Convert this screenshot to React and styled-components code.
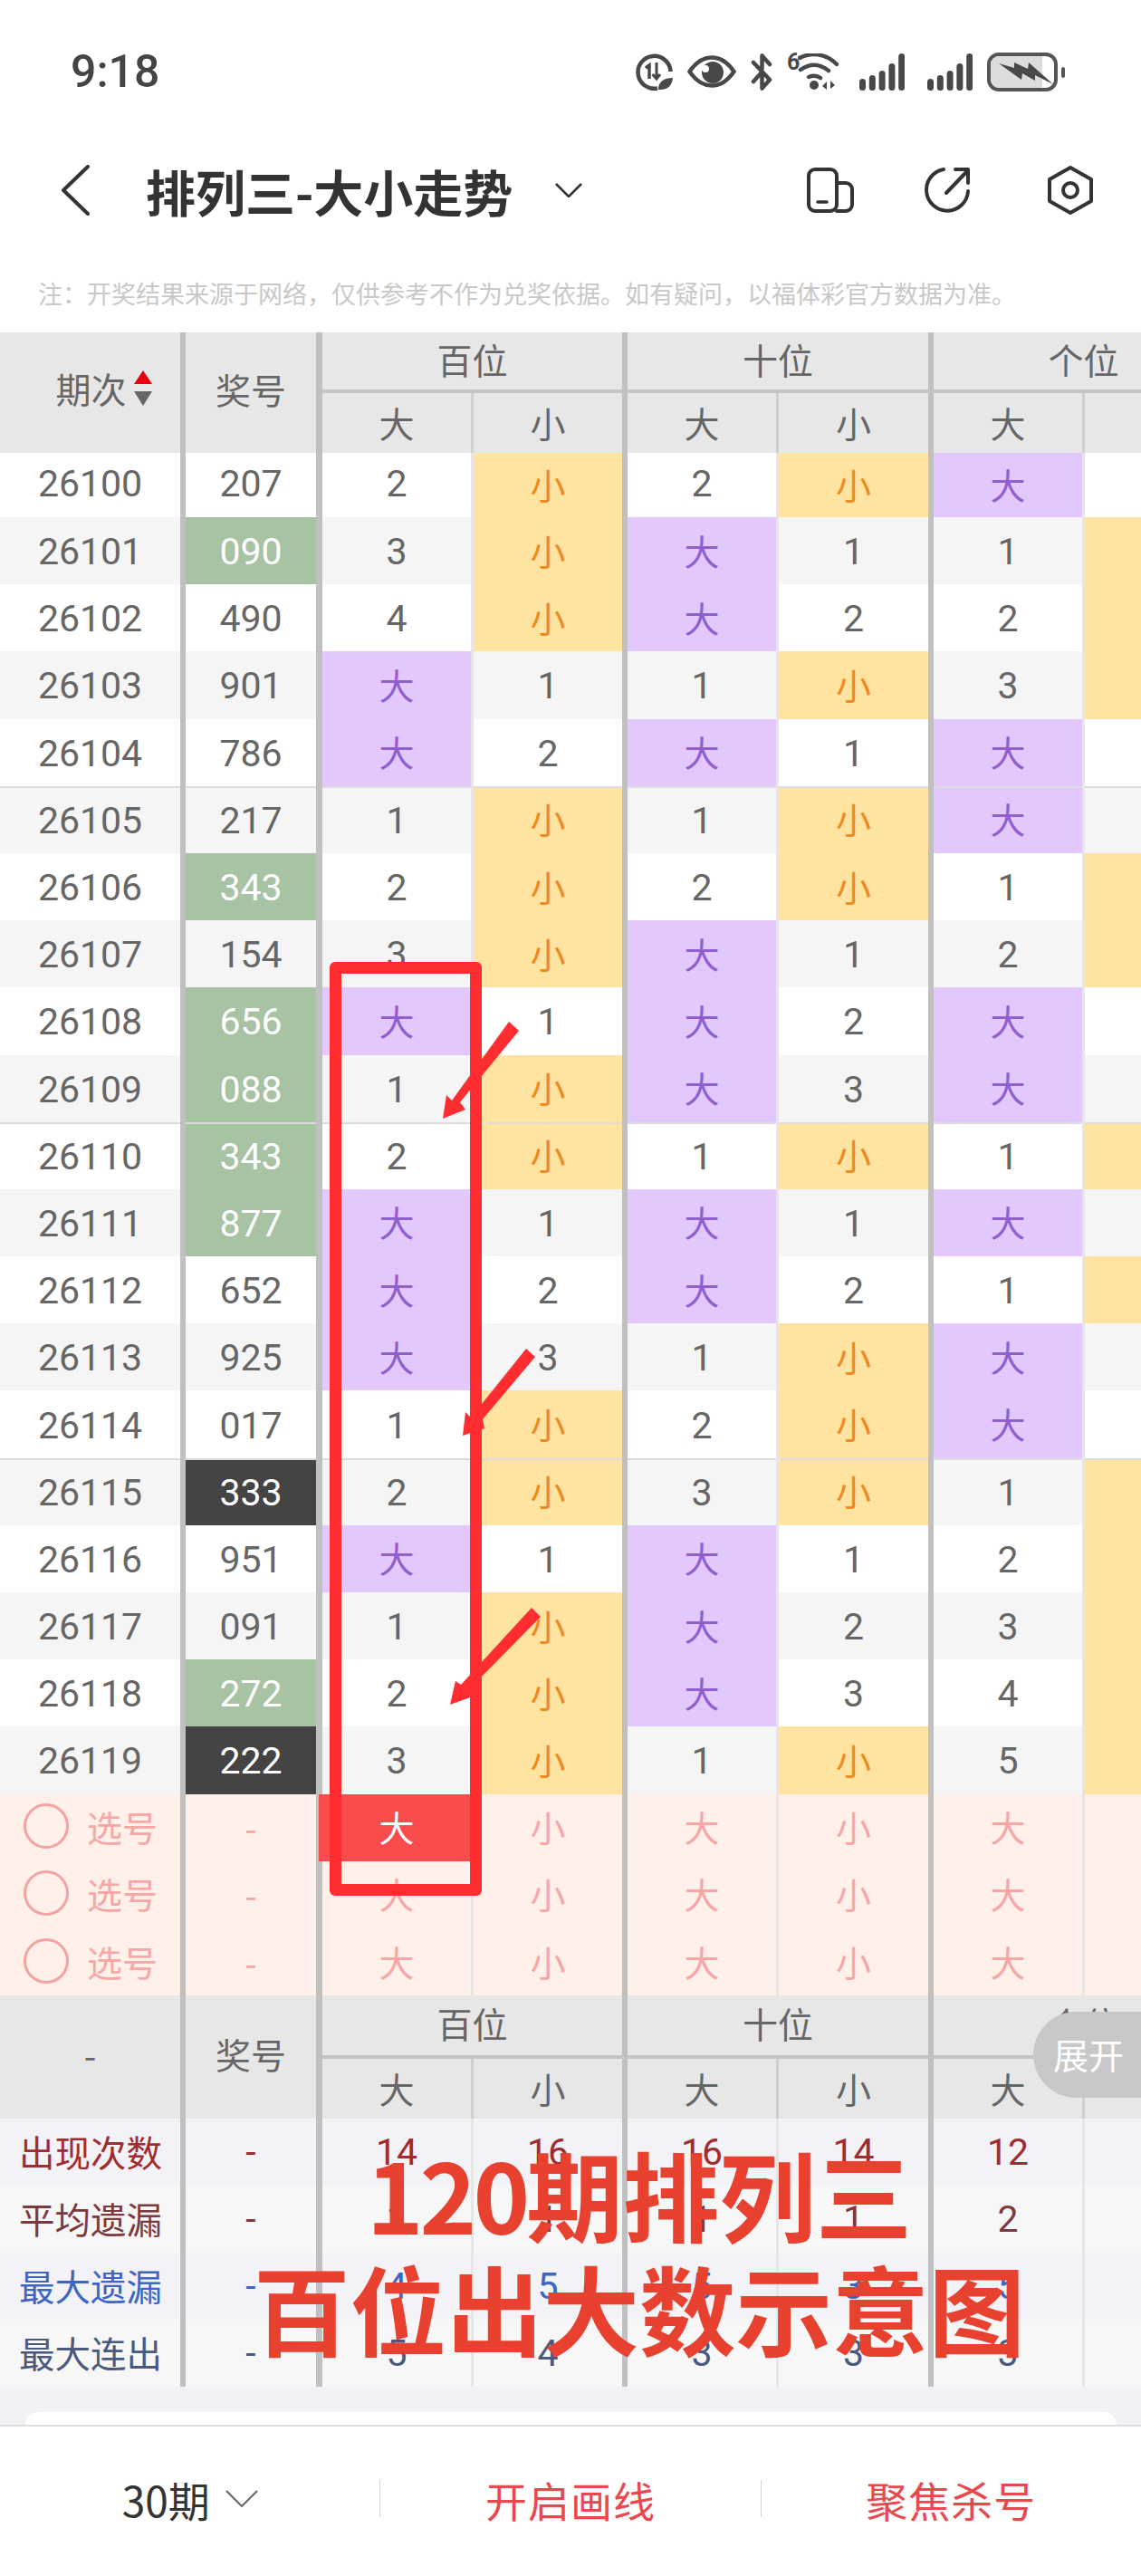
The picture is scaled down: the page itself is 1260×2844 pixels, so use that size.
import styled, { createGlobalStyle } from "styled-components"

const GlobalStyle = createGlobalStyle`
    html, body {
        margin: 0;
        padding: 0;
        background: #fff;
    }
    * {
        box-sizing: border-box;
    }
`

const COLS = "205px 151px 167px 170px 167px 171px 167px 170px"
const SANS = `Roboto, "Noto Sans CJK SC", sans-serif`
const CJK = `"Noto Sans CJK SC", sans-serif`

// period, number, number tone, then 百大 百小 十大 十小 个大 个小
const rows = [
    ["26100", "207", "", "2", "小", "2", "小", "大", "1"],
    ["26101", "090", "green", "3", "小", "大", "1", "1", "小"],
    ["26102", "490", "", "4", "小", "大", "2", "2", "小"],
    ["26103", "901", "", "大", "1", "1", "小", "3", "小"],
    ["26104", "786", "", "大", "2", "大", "1", "大", "1"],
    ["26105", "217", "", "1", "小", "1", "小", "大", "2"],
    ["26106", "343", "green", "2", "小", "2", "小", "1", "小"],
    ["26107", "154", "", "3", "小", "大", "1", "2", "小"],
    ["26108", "656", "green", "大", "1", "大", "2", "大", "1"],
    ["26109", "088", "green", "1", "小", "大", "3", "大", "2"],
    ["26110", "343", "green", "2", "小", "1", "小", "1", "小"],
    ["26111", "877", "green", "大", "1", "大", "1", "大", "1"],
    ["26112", "652", "", "大", "2", "大", "2", "1", "小"],
    ["26113", "925", "", "大", "3", "1", "小", "大", "1"],
    ["26114", "017", "", "1", "小", "2", "小", "大", "2"],
    ["26115", "333", "black", "2", "小", "3", "小", "1", "小"],
    ["26116", "951", "", "大", "1", "大", "1", "2", "小"],
    ["26117", "091", "", "1", "小", "大", "2", "3", "小"],
    ["26118", "272", "green", "2", "小", "大", "3", "4", "小"],
    ["26119", "222", "black", "3", "小", "1", "小", "5", "小"],
]

const stats = [
    { label: "出现次数", color: "#a02c30", values: ["14", "16", "16", "14", "12", ""] },
    { label: "平均遗漏", color: "#7c3a3e", values: ["1", "1", "1", "1", "2", ""] },
    { label: "最大遗漏", color: "#3d66c4", values: ["4", "5", "5", "3", "5", ""] },
    { label: "最大连出", color: "#4a5a7e", values: ["5", "4", "3", "3", "3", ""] },
]

const toneOf = (v) => (v === "大" ? "big" : v === "小" ? "small" : "")

function StatusIcons() {
    return (
        <IconRow>
            <svg width="41" height="41" viewBox="0 0 41 41" fill="none" stroke="#484848">
                <path d="M24 38.5A18 18 0 1 1 38.5 20" strokeWidth="4.5" />
                <path d="M11 16l4-3v15" strokeWidth="3.5" />
                <path d="M23 10v18M18.5 23l4.5 5 4-5" strokeWidth="3" />
                <path d="M25 40c0-9 6-13 16-13-1 9-6 13-14 13z" fill="#484848" stroke="none" />
            </svg>
            <svg width="54" height="36" viewBox="0 0 54 36" fill="none">
                <path d="M2.5 18C10 7 18 2.5 27 2.5S44 7 51.5 18C44 29 36 33.5 27 33.5S10 29 2.5 18z" stroke="#484848" strokeWidth="4.5" />
                <circle cx="28" cy="19" r="12" fill="#484848" />
                <circle cx="20" cy="15" r="4" fill="#fff" />
            </svg>
            <svg width="24" height="41" viewBox="0 0 24 41" fill="none" stroke="#484848" strokeWidth="4.5" strokeLinejoin="round" strokeLinecap="round">
                <path d="M3 10l18 19-8.5 9.5V24M21 12l-8.5-9.5V17M3 31l9-10" />
            </svg>
            <Wifi>
                <WifiSix>6</WifiSix>
                <svg width="45" height="41" viewBox="0 0 45 41" fill="none" stroke="#484848" strokeWidth="4.5" strokeLinecap="round">
                    <path d="M2 5C14-1 30-1 43 12" />
                    <path d="M3 18c10-7 21-7 31 1" />
                    <path d="M12 26c5-2 9-2 13 1" />
                    <circle cx="18" cy="35" r="5" fill="#484848" stroke="none" />
                    <path d="M27 36l5-5v9zM36 30v9l5-4" fill="#484848" stroke="none" />
                </svg>
            </Wifi>
            <SignalIcon $gap={7} />
            <SignalIcon $gap={9} />
            <svg width="86" height="43" viewBox="0 0 86 43" fill="none">
                <rect x="2" y="2" width="74" height="39" rx="11" fill="#fff" stroke="#555" strokeWidth="4" />
                <path d="M4 13a9 9 0 0 1 9-9h48v35H13a9 9 0 0 1-9-9z" fill="#dcdcdc" />
                <path d="M13 12l17 5 0-6 15 7 1-7 27 24-20-10 0 6-14-8-1 7z" fill="#484848" />
                <rect x="82" y="16" width="4" height="12" rx="2" fill="#555" />
            </svg>
        </IconRow>
    )
}

function SignalIcon({ $gap }) {
    const bars = [13, 17, 22, 30, 41]
    return (
        <SignalSvg $gap={$gap} width="50" height="41" viewBox="0 0 50 41">
            {bars.map((h, i) => (
                <rect key={i} x={i * 10.8} y={41 - h} width="7" height={h} rx="3.5" fill="#484848" />
            ))}
        </SignalSvg>
    )
}

function HeaderBlock({ top, corner }) {
    return (
        <HeadGrid $top={top}>
            <HeadSide>{corner}</HeadSide>
            <HeadSide $narrow>奖号</HeadSide>
            <GroupTitle>百位</GroupTitle>
            <GroupTitle>十位</GroupTitle>
            <GroupTitle>个位</GroupTitle>
            {[0, 1, 2, 3, 4, 5].map((i) => (
                <SubHead key={i} $main={i % 2 === 1 && i !== 5}>{i % 2 === 0 ? "大" : "小"}</SubHead>
            ))}
        </HeadGrid>
    )
}

function App() {
    return (
        <Page>
            <GlobalStyle />
            <StatusBar>
                <Clock>9:18</Clock>
                <StatusIcons />
            </StatusBar>
            <NavBar>
                <svg width="32" height="56" viewBox="0 0 32 56" fill="none" stroke="#333" strokeWidth="4" strokeLinecap="round" strokeLinejoin="round">
                    <path d="M30 2L3 28l27 26" />
                </svg>
                <Title>排列三-大小走势</Title>
                <TitleChevron width="30" height="16" viewBox="0 0 30 16" fill="none" stroke="#333" strokeWidth="2.6">
                    <path d="M1 1l14 14L29 1" />
                </TitleChevron>
                <NavActions>
                    <svg width="52" height="50" viewBox="0 0 52 50" fill="none" stroke="#333" strokeWidth="4" strokeLinecap="round">
                        <rect x="2" y="2" width="31" height="46" rx="7" />
                        <path d="M33 17h10a7 7 0 0 1 7 7v17a7 7 0 0 1-7 7H33" />
                        <path d="M12 38h10" strokeWidth="3.5" />
                    </svg>
                    <svg width="52" height="50" viewBox="0 0 52 50" fill="none" stroke="#333" strokeWidth="4" strokeLinecap="round" strokeLinejoin="round">
                        <path d="M22 2A23 23 0 1 0 49 26" />
                        <path d="M25 28L49 3M35 2h14v15" />
                    </svg>
                    <HexIcon width="50" height="54" viewBox="0 0 50 54" fill="none" stroke="#333" strokeWidth="4" strokeLinejoin="round">
                        <path d="M25 2l23 13v24L25 52 2 39V15z" />
                        <circle cx="25" cy="27" r="8" />
                    </HexIcon>
                </NavActions>
            </NavBar>
            <Note>注：开奖结果来源于网络，仅供参考不作为兑奖依据。如有疑问，以福体彩官方数据为准。</Note>

            <TableWrap>
                <HeaderBlock
                    top="67px"
                    corner={
                        <PeriodHead>
                            期次
                            <SortMark>
                                <SortUp />
                                <SortDown />
                            </SortMark>
                        </PeriodHead>
                    }
                />

                {rows.map((r, i) => (
                    <Row key={r[0]} $alt={i % 2 === 1} $first={i === 0}>
                        <Cell $side $sep={i > 0 && i % 5 === 0}>{r[0]}</Cell>
                        <Cell $side $number $tone={r[2]} $sep={i > 0 && i % 5 === 0}>{r[1]}</Cell>
                        {r.slice(3).map((v, j) => (
                            <Cell key={j} $tone={toneOf(v)} $main={j % 2 === 1 && j !== 5} $sep={i > 0 && i % 5 === 0}>{v}</Cell>
                        ))}
                    </Row>
                ))}

                {[0, 1, 2].map((i) => (
                    <PickRow key={i}>
                        <Cell $side>
                            <PickLabel>
                                <PickCircle />
                                选号
                            </PickLabel>
                        </Cell>
                        <Cell $side $number>-</Cell>
                        {["大", "小", "大", "小", "大", "小"].map((v, j) => (
                            <Cell key={j} $picked={i === 0 && j === 0} $main={j % 2 === 1 && j !== 5}>{v}</Cell>
                        ))}
                    </PickRow>
                ))}

                <HeaderBlock top="70px" corner="-" />

                {stats.map((s, i) => (
                    <StatRow key={s.label} $alt={i % 2 === 1} $color={s.color}>
                        <StatLabel>{s.label}</StatLabel>
                        <Cell $side $number>-</Cell>
                        {s.values.map((v, j) => (
                            <Cell key={j} $main={j % 2 === 1 && j !== 5}>{v}</Cell>
                        ))}
                    </StatRow>
                ))}
            </TableWrap>

            <CardGap>
                <CardEdge />
            </CardGap>

            <BottomBar>
                <BottomItem>
                    30期
                    <svg width="36" height="19" viewBox="0 0 36 19" fill="none" stroke="#666" strokeWidth="2">
                        <path d="M1 1l17 17L35 1" />
                    </svg>
                </BottomItem>
                <BottomDivider />
                <BottomItem $red>开启画线</BottomItem>
                <BottomDivider />
                <BottomItem $red>聚焦杀号</BottomItem>
            </BottomBar>

            <ExpandTab>展开</ExpandTab>
            <RedBox />
            <ArrowLayer width="1260" height="2844" viewBox="0 0 1260 2844">
                <path d="M562 1128L573 1138 508 1217 514 1225 489 1235 493 1209 499 1215z" fill="#ff2d30" />
                <path d="M581 1489L591 1498 533 1567 535 1577 511 1585 514 1559 520 1565z" fill="#ff2d30" />
                <path d="M587 1775L597 1785 523 1860 522 1873 497 1882 503 1856 509 1860z" fill="#ff2d30" />
            </ArrowLayer>
            <Caption>
                <CaptionLine><CaptionDigits>120</CaptionDigits>期排列三</CaptionLine>
                <CaptionLine>百位出大数示意图</CaptionLine>
            </Caption>
        </Page>
    )
}

const Page = styled.div`
    position: relative;
    width: 1260px;
    height: 2844px;
    overflow: hidden;
    background: #fff;
    font-family: ${SANS};
`

const StatusBar = styled.div`
    height: 158px;
    padding: 0 84px 0 78px;
    display: flex;
    align-items: center;
    justify-content: space-between;
`

const Clock = styled.div`
    font-size: 50px;
    color: #444;
    font-weight: 500;
`

const IconRow = styled.div`
    display: flex;
    align-items: center;
    gap: 16px;
`

const Wifi = styled.div`
    display: flex;
    align-items: flex-start;
    gap: 1px;
`

const WifiSix = styled.span`
    font-size: 25px;
    line-height: 20px;
    font-weight: 700;
    color: #484848;
    width: 11px;
`

const SignalSvg = styled.svg`
    margin-left: ${(p) => p.$gap}px;
`

const NavBar = styled.div`
    height: 104px;
    padding: 0 53px 0 67px;
    display: flex;
    align-items: center;
`

const Title = styled.div`
    margin-left: 62px;
    font-family: ${CJK};
    font-size: 55px;
    font-weight: 700;
    color: #333;
`

const TitleChevron = styled.svg`
    margin-left: 47px;
`

const NavActions = styled.div`
    margin-left: auto;
    display: flex;
    align-items: center;
    gap: 77px;
`

const HexIcon = styled.svg`
    margin-left: 8px;
`

const Note = styled.div`
    height: 105px;
    padding: 41px 0 0 42px;
    font-family: ${CJK};
    font-size: 27px;
    line-height: 42px;
    color: #c8c8c8;
    white-space: nowrap;
`

const TableWrap = styled.div`
    width: 1368px;
    color: #666;
    font-size: 41px;
`

const HeadGrid = styled.div`
    display: grid;
    grid-template-columns: ${COLS};
    grid-template-rows: ${(p) => p.$top} 66px;
    background: #e7e7e7;
    font-family: ${CJK};
    font-size: 39px;
    color: #666;
`

const HeadSide = styled.div`
    grid-row: 1 / 3;
    display: flex;
    align-items: center;
    justify-content: center;
    padding-bottom: 9px;
    border-right: ${(p) => (p.$narrow ? 7 : 6)}px solid #c0c0c0;
`

const PeriodHead = styled.div`
    display: flex;
    align-items: center;
    gap: 8px;
    margin: 0 0 2px 30px;
`

const SortMark = styled.div`
    display: flex;
    flex-direction: column;
    gap: 8px;
`

const SortUp = styled.div`
    width: 0;
    height: 0;
    border-left: 10px solid transparent;
    border-right: 10px solid transparent;
    border-bottom: 15px solid #e8000f;
`

const SortDown = styled.div`
    width: 0;
    height: 0;
    border-left: 10px solid transparent;
    border-right: 10px solid transparent;
    border-top: 16px solid #666;
`

const GroupTitle = styled.div`
    grid-column: span 2;
    display: flex;
    align-items: center;
    justify-content: center;
    padding-bottom: 6px;
    border-right: 6px solid #c0c0c0;
    border-bottom: 4px solid #c4c4c4;
`

const SubHead = styled.div`
    display: flex;
    align-items: center;
    justify-content: center;
    padding-bottom: 3px;
    border-right: ${(p) => (p.$main ? "6px solid #c0c0c0" : "3px solid #cfcfcf")};
`

const Row = styled.div`
    display: grid;
    grid-template-columns: ${COLS};
    height: ${(p) => (p.$first ? "71px" : "74.2px")};
    background: ${(p) => (p.$alt ? "#f5f5f5" : "#fff")};
    & > div {
        padding-top: ${(p) => (p.$first ? "0" : "2px")};
        padding-bottom: ${(p) => (p.$first ? "3px" : "0")};
    }
`

const tones = {
    big: `background: #e2c8fc; color: #8f5fce; font-family: ${CJK}; font-size: 39px; && { padding-top: 0; padding-bottom: 3px; }`,
    small: `background: #ffe3a1; color: #ee8a22; font-family: ${CJK}; font-size: 39px; && { padding-top: 0; padding-bottom: 3px; }`,
    green: "background: #a8c2a4; color: #fff;",
    black: "background: #444; color: #fff;",
}

const Cell = styled.div`
    display: flex;
    align-items: center;
    justify-content: center;
    min-width: 0;
    border-right: ${(p) =>
        p.$number ? "7px solid #c0c0c0" : p.$side || p.$main ? "6px solid #c0c0c0" : "3px solid #e6e6e6"};
    ${(p) => tones[p.$tone] || ""}
    ${(p) => p.$sep && "box-shadow: inset 0 2px 0 #dcdcdc;"}
    ${(p) =>
        p.$picked &&
        `background: #fa4b4d; color: #fff; box-shadow: -4px 0 0 #fa4b4d; position: relative;`}
`

const PickRow = styled.div`
    display: grid;
    grid-template-columns: ${COLS};
    height: 74.2px;
    background: #fff0ea;
    color: #f7a6a6;
    font-family: ${CJK};
    font-size: 39px;
    & > div {
        padding-bottom: 3px;
    }
`

const PickLabel = styled.div`
    display: flex;
    align-items: center;
    gap: 20px;
    width: 100%;
    padding-left: 26px;
`

const PickCircle = styled.div`
    width: 50px;
    height: 50px;
    border: 3px solid #f4a3a3;
    border-radius: 50%;
`

const StatRow = styled.div`
    display: grid;
    grid-template-columns: ${COLS};
    height: 74px;
    background: ${(p) => (p.$alt ? "#f7f7f7" : "#f2f2f7")};
    color: ${(p) => p.$color};
`

const StatLabel = styled.div`
    display: flex;
    align-items: center;
    padding: 0 0 3px 21px;
    font-family: ${CJK};
    font-size: 39.5px;
    white-space: nowrap;
    border-right: 6px solid #c0c0c0;
`

const CardGap = styled.div`
    height: 42px;
    padding: 28px 27px 0 28px;
    background: #f2f2f6;
`

const CardEdge = styled.div`
    height: 14px;
    background: #fff;
    border-radius: 20px 20px 0 0;
`

const BottomBar = styled.div`
    height: 167px;
    border-top: 2px solid #dedede;
    display: flex;
    align-items: center;
    padding-bottom: 6px;
`

const BottomItem = styled.div`
    flex: 1;
    display: flex;
    align-items: center;
    justify-content: center;
    gap: 17px;
    font-family: ${CJK};
    font-size: 46px;
    letter-spacing: ${(p) => (p.$red ? "1px" : "0")};
    color: ${(p) => (p.$red ? "#e8484e" : "#333")};
`

const BottomDivider = styled.div`
    width: 1px;
    height: 41px;
    background: #d4d4d4;
`

const ExpandTab = styled.div`
    position: absolute;
    top: 2221px;
    right: 0;
    width: 119px;
    height: 95px;
    padding: 0 0 4px 22px;
    display: flex;
    align-items: center;
    background: #c8c8c8;
    border-radius: 48px 0 0 48px;
    color: #fff;
    font-family: ${CJK};
    font-size: 39px;
    white-space: nowrap;
`

const RedBox = styled.div`
    position: absolute;
    left: 364px;
    top: 1062px;
    width: 168px;
    height: 1031px;
    border: 13px solid #ff2d30;
    border-radius: 6px;
`

const ArrowLayer = styled.svg`
    position: absolute;
    left: 0;
    top: 0;
    pointer-events: none;
`

const Caption = styled.div`
    position: absolute;
    left: 0;
    top: 2358px;
    width: 1412px;
    display: flex;
    flex-direction: column;
    align-items: center;
    font-family: ${CJK};
    font-size: 106.5px;
    line-height: 126px;
    font-weight: 700;
    color: #e8412f;
`

const CaptionLine = styled.div`
    white-space: nowrap;
`

const CaptionDigits = styled.span`
    letter-spacing: -4px;
`

export default App
